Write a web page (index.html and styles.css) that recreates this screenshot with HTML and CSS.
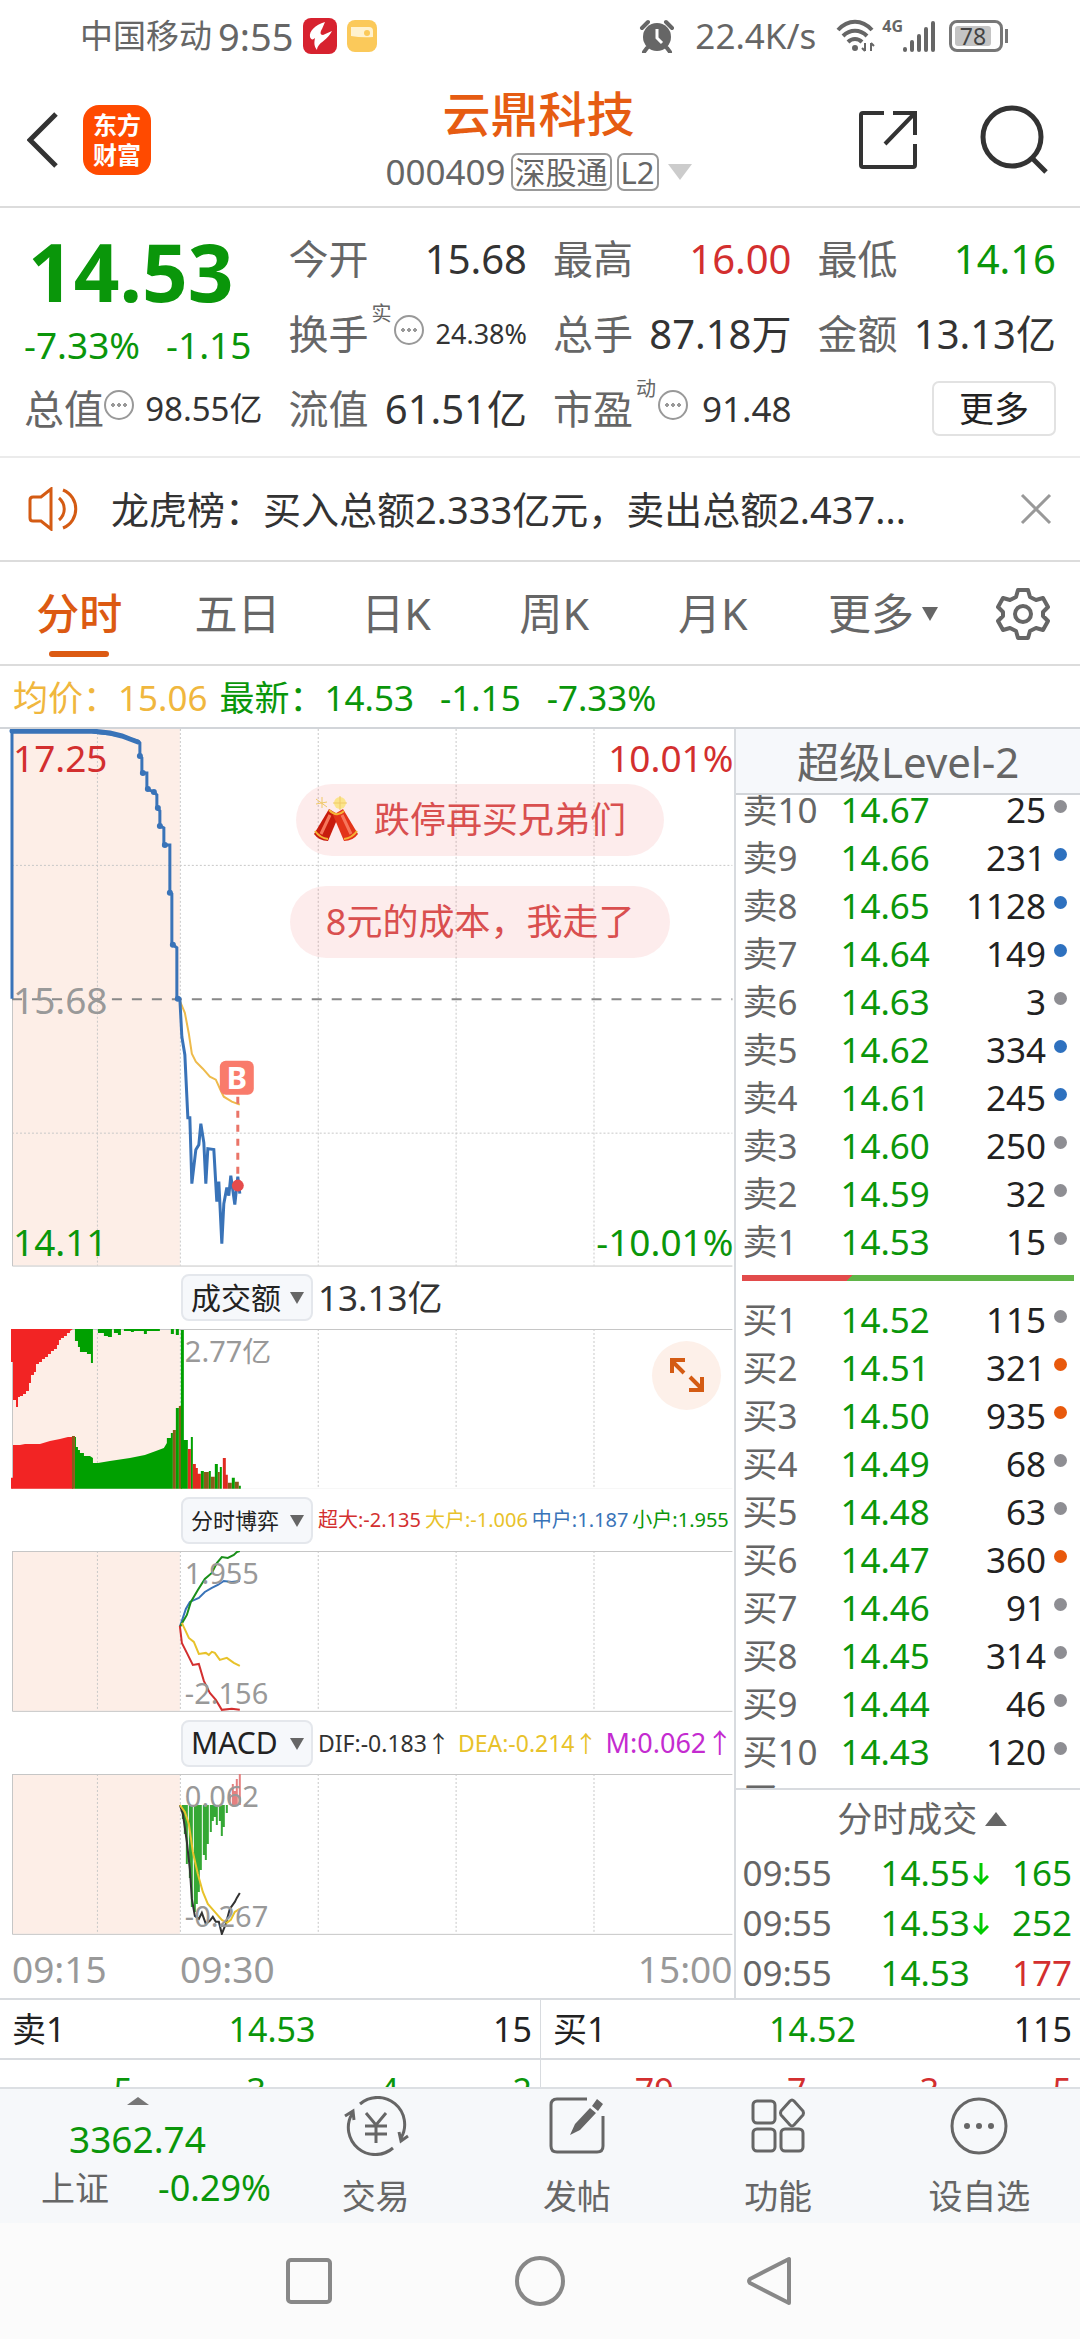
FILE: index.html
```html
<!DOCTYPE html>
<html lang="zh-CN">
<head>
    <meta charset="UTF-8">
    <meta name="viewport" content="width=device-width, initial-scale=1.0">
    <title>云鼎科技 000409</title>
    <link rel="stylesheet" href="styles.css">
</head>
<body>
    <div class="status">
        <span class="carrier">中国移动</span>
        <span class="clock">9:55</span>
        <svg class="app-red" width="34" height="36" viewBox="0 0 34 36"><rect width="34" height="36" rx="8" fill="#d7222f"/><path d="M22 4C12 7 6 13 7 19c1 3 3 3 5 1-1 5-1 8 2 12 1-8 9-8 15-19l-9 4c-3 0-3-3-1-6z" fill="#fff"/></svg>
        <svg width="30" height="32" viewBox="0 0 30 32"><rect width="30" height="32" rx="8" fill="#fbc95a"/><path d="M4 7h18q4 0 4 4v6q-11 1-22-1z" fill="#fff2cf"/><circle cx="20" cy="13" r="3" fill="#fbc95a"/></svg>
        <span class="spacer"></span>
        <svg width="36" height="34" viewBox="0 0 36 34"><circle cx="18" cy="18" r="14" fill="#666"/><path d="M3 9l6-6M33 9l-6-6M8 29l-3 4M28 29l3 4" stroke="#666" stroke-width="4" stroke-linecap="round"/><path d="M18 10v9l5 5" stroke="#fff" stroke-width="3" fill="none"/></svg>
        <span class="speed">22.4K/s</span>
        <svg class="wifi" width="40" height="34" viewBox="0 0 40 34" fill="none" stroke="#666" stroke-width="4"><path d="M2 11c10-11 24-11 34 0M7 17c7-7 17-7 24 0M12 23c4-4 10-4 14 0"/><circle cx="19" cy="29" r="2" fill="#666" stroke-width="2"/><path d="M29 24v8M35 24v8M26 29l3 3M38 27l-3-3" stroke-width="2"/></svg>
        <span class="net">4G</span>
        <svg width="34" height="32" viewBox="0 0 34 32" stroke="#666" stroke-width="4" stroke-linecap="round"><path d="M2 29v1M9 22v8M16 16v14M23 9v21M30 3v27"/></svg>
        <span class="battery"><span>78</span></span>
    </div>

    <header class="header">
        <div class="header-left">
            <button class="icon-btn" aria-label="返回"><svg width="32" height="56" viewBox="0 0 32 56"><path d="M29 2L3 28l26 26" fill="none" stroke="#333" stroke-width="5"/></svg></button>
            <div class="logo">东方<br>财富</div>
        </div>
        <div class="header-title">
            <h1>云鼎科技</h1>
            <div class="code">
                <span>000409</span>
                <span class="badge">深股通</span>
                <span class="badge">L2</span>
                <svg width="24" height="16" viewBox="0 0 24 16"><path d="M0 0h24L12 16z" fill="#ccc"/></svg>
            </div>
        </div>
        <div class="header-right">
            <button class="icon-btn" aria-label="分享"><svg width="60" height="60" viewBox="0 0 60 60" fill="none" stroke="#333" stroke-width="4"><path d="M26 3H5q-2 0-2 2v50q0 2 2 2h50q2 0 2-2V34M35 3h22v22M56 4L27 34"/></svg></button>
            <button class="icon-btn" aria-label="搜索"><svg width="72" height="70" viewBox="0 0 72 70" fill="none" stroke="#333" stroke-width="5"><circle cx="34" cy="32" r="29"/><path d="M54 53l14 14"/></svg></button>
        </div>
    </header>

    <section class="quote">
        <div class="price">
            <div class="last">14.53</div>
            <div class="change"><span>-7.33%</span><span>-1.15</span></div>
        </div>
        <div class="cell"><span>今开</span><b>15.68</b></div>
        <div class="cell"><span>最高</span><b class="red">16.00</b></div>
        <div class="cell"><span>最低</span><b class="green">14.16</b></div>
        <div class="cell"><span>换手</span><sup>实</sup><i class="more-dot"></i><b class="small">24.38%</b></div>
        <div class="cell"><span>总手</span><b>87.18万</b></div>
        <div class="cell"><span>金额</span><b>13.13亿</b></div>
        <div class="cell"><span>总值</span><i class="more-dot"></i><b class="mid">98.55亿</b></div>
        <div class="cell"><span>流值</span><b>61.51亿</b></div>
        <div class="cell"><span>市盈</span><sup>动</sup><i class="more-dot"></i><b class="pe">91.48</b></div>
        <div class="cell"><button class="more-btn">更多</button></div>
    </section>

    <section class="notice">
        <svg width="52" height="44" viewBox="0 0 52 44" fill="none" stroke="#d45b13" stroke-width="3"><path d="M23 2v40L13 34H5q-3 0-3-3V13q0-3 3-3h8zM31 11c7 6 7 16 0 22M35 3c17 7 17 31 0 38"/></svg>
        <p>龙虎榜：买入总额2.333亿元，卖出总额2.437...</p>
        <button class="icon-btn" aria-label="关闭"><svg width="32" height="32" viewBox="0 0 32 32"><path d="M2 2l28 28M30 2L2 30" stroke="#999" stroke-width="3"/></svg></button>
    </section>

    <nav class="tabs">
        <button class="tab active">分时</button>
        <button class="tab">五日</button>
        <button class="tab">日K</button>
        <button class="tab">周K</button>
        <button class="tab">月K</button>
        <button class="tab tab-more">更多<svg width="16" height="14" viewBox="0 0 16 14"><path d="M0 0h16L8 14z" fill="#666"/></svg></button>
        <button class="tab tab-gear" aria-label="设置"><svg width="54" height="54" viewBox="0 0 54 54" fill="none" stroke="#666" stroke-width="4" stroke-linejoin="round"><path d="M22 3h10l2 7 6 3 7-2 5 9-5 5v4l5 5-5 9-7-2-6 3-2 7H22l-2-7-6-3-7 2-5-9 5-5v-4l-5-5 5-9 7 2 6-3z"/><circle cx="27" cy="27" r="8"/></svg></button>
    </nav>

    <div class="legend">
        <span class="amber">均价：15.06</span>
        <span>最新：14.53</span>
        <span class="num">-1.15</span>
        <span class="num">-7.33%</span>
    </div>

    <main class="main">
        <div class="charts">
            <div class="chart">
                <svg class="plot" viewBox="0 0 735 538">
                    <rect class="auction" x="12" y="0" width="168" height="537"/>
                    <path class="grid" d="M97.5 0V537M180.5 0V537M318.5 0V537M456.5 0V537M594.5 0V537M12 136.500H733M12 404.500H733"/>
                    <path class="frame" d="M12.500 0V537.500H733"/>
                    <path d="M12 270.500H733" stroke="#888" stroke-width="2" stroke-dasharray="10 10"/>
                    <path class="line amber-line" d="M180 272L185 284L189 305L192 325L196 333L203 340L210 348L216 351L221 362L224 368L232 373L240 376"/>
                    <path class="line price-line" d="M12 270V3H92L110 5L122 7L130 10L138 12L140 14V27L142 29V44H147V60L154 63L157 66V79L160 82V97L164 99V116H170V164L172 165V215L177 219V270H180L182 308L185 326L188 389H190L192 455L196 421L199 416L201 395L204 414L206 455L208 420L214 421L217 473L219 453L222 515L224 475L227 459L229 467L231 447L235 476L238 448L240 465"/>
                    <path d="M12 2H92L110 4L122 7L130 10L138 13" fill="none" stroke="#3973b8" stroke-width="5" stroke-linecap="round"/>
                    <g fill="#3973b8"><circle cx="140" cy="27" r="3"/><circle cx="143" cy="44" r="3"/><circle cx="148" cy="60" r="3"/><circle cx="154" cy="63" r="3"/><circle cx="158" cy="79" r="3"/><circle cx="160" cy="97" r="3"/><circle cx="165" cy="116" r="3"/><circle cx="170" cy="164" r="3"/><circle cx="173" cy="216" r="3"/><circle cx="178" cy="270" r="3"/></g>
                    <path d="M238 368V446" stroke="#ea7468" stroke-width="3" stroke-dasharray="7 7"/>
                    <circle cx="238" cy="457" r="6" fill="#e54b4b"/>
                    <rect x="220" y="332" width="34" height="34" rx="6" fill="#f97b6b"/>
                    <text class="mark" x="237" y="360">B</text>
                    <text class="axis up" x="13" y="43">17.25</text>
                    <text class="axis" x="13" y="285">15.68</text>
                    <text class="axis down" x="13" y="527">14.11</text>
                    <text class="axis up end" x="734" y="43">10.01%</text>
                    <text class="axis down end" x="734" y="527">-10.01%</text>
                </svg>
                <div class="bubbles">
                    <div class="bubble">
                        <svg width="48" height="48" viewBox="0 0 48 48"><path d="M17 13l10 6-11 26q-9 0-14-7z" fill="#c81c0d"/><path d="M31 13l-10 6 11 26q9 0 14-7z" fill="#e33419"/><path d="M18 19l-9 19M30 19l9 19" stroke="#f7765b" stroke-width="3"/><path d="M3 35q5 7 13 8M45 35q-5 7-13 8M17 14q8 8 15 1" stroke="#f5b335" stroke-width="2" fill="none"/><circle cx="28" cy="7" r="6" fill="#fbe48b"/><path d="M28 0v14M21 7h14M4 3l11 8M10 1v11M4 8l11-2" stroke="#f0c968" stroke-width="1"/></svg>
                        跌停再买兄弟们
                    </div>
                    <div class="bubble wide">8元的成本，我走了</div>
                </div>
            </div>

            <div class="ind-head">
                <div class="pick"><select aria-label="指标一"><option>成交额</option></select><i></i></div>
                <span class="total">13.13亿</span>
            </div>
            <div class="chart">
                <svg class="plot" viewBox="0 0 735 161">
                    <rect class="auction" x="12" y="0" width="168" height="160"/>
                    <path class="grid" d="M97.5 0V160M180.5 0V160M318.5 0V160M456.5 0V160M594.5 0V160"/>
                    <path class="frame" d="M12.500 0V160.500H733M12.500 .5H733"/>
                    <path fill="#f22424" d="M11 0H73L70 2V4H67V7H64V9H61V11H59V16H57V20H54V22H51V25H48V28H45V30H42V33H39V35H36V43H34V46H31V54H29V62H26V65H23V67H20V68H18V78H16V71H13V33H11z"/>
                    <path fill="#f22424" d="M11 160V149H13V116H20L25 115H40L50 112L60 110L68 108H73V160z"/>
                    <path fill="#00a000" d="M75 0H93V34H91V25H87V23H80V18H78V12H75zM98 0H112V8H108V7H104V4H98zM114 0H121V6H118V4H114zM124 0H160V2H147V5H144V2H134V3H131V2H124zM171 0H174V5H171zM176 0H179V6H176z"/>
                    <path fill="#00a000" d="M75 160V108H76V118H78V121H80V124H84V127H90L93 129V134H98L110 132L130 129L145 126L156 122L164 119L167 114V109H171V104H173V160z"/>
                    <path fill="#8a5a1a" d="M72 107H75V160H72zM173 101H176V160H173zM179 77H182V160H179z"/>
                    <path fill="#00a000" d="M176 79H179V160H176zM181 1H184V160H181zM184 111H188V160H184zM191 108H193V160H191zM201 142H204V160H201zM209 142H211V160H209zM215 135H218V160H215zM220 138H222V160H220zM232 149H235V160H232zM239 157H241V160H239z"/>
                    <path fill="#e02a20" d="M188 120H191V160H188zM193 135H196V160H193zM196 139H198V160H196zM198 145H201V160H198zM223 129H226V160H223zM226 146H228V160H226z"/>
                    <path fill="#8a5a1a" d="M204 143H209V160H204zM211 148H215V160H211zM218 143H220V160H218zM228 154H232V160H228zM235 153H239V160H235z"/>
                    <text class="axis sm" x="185" y="33">2.77亿</text>
                </svg>
                <button class="expand" aria-label="放大"><svg width="36" height="36" viewBox="0 0 36 36" fill="none" stroke="#d45b13" stroke-width="4"><path d="M3 16V3h13M3 4l12 12M33 20v13H20M33 32L21 20"/></svg></button>
            </div>

            <div class="ind-head">
                <div class="pick four"><select aria-label="指标二"><option>分时博弈</option></select><i></i></div>
                <div class="flows">
                    <span class="red">超大:-2.135</span>
                    <span class="gold">大户:-1.006</span>
                    <span class="blue">中户:1.187</span>
                    <span class="green">小户:1.955</span>
                </div>
            </div>
            <div class="chart">
                <svg class="plot" viewBox="0 0 735 161">
                    <rect class="auction" x="12" y="0" width="168" height="160"/>
                    <path class="grid" d="M97.5 0V160M180.5 0V160M318.5 0V160M456.5 0V160M594.5 0V160"/>
                    <path class="frame" d="M12.500 0V160.500H733M12.500 .5H733"/>
                    <path class="line" stroke="#3973b8" d="M180 76L186 58L190 51L199 47L205 41L212 37L218 34L224 30L232 31L240 30"/>
                    <path class="line" stroke="#1a8f1a" d="M180 76L187 64L191 51L198 39L205 28L212 22L217 12L222 6L228 7L234 4L237 1L240 0"/>
                    <path class="line" stroke="#e8c22a" d="M182 72L189 87L194 91L199 103L206 102L209 104L212 101L215 102L220 109L227 107L234 112L240 115"/>
                    <path class="line" stroke="#d32f2f" d="M180 75L182 92L187 102L193 114L199 113L204 130L210 142L216 149L222 159L232 158L240 159"/>
                    <text class="axis sm" x="185" y="33">1.955</text>
                    <text class="axis sm" x="185" y="153">-2.156</text>
                </svg>
            </div>

            <div class="ind-head">
                <div class="pick"><select aria-label="指标三"><option>MACD</option></select><i></i></div>
                <div class="macd">
                    <span>DIF:-0.183↑</span>
                    <span class="gold">DEA:-0.214↑</span>
                    <span class="magenta">M:0.062↑</span>
                </div>
            </div>
            <div class="chart">
                <svg class="plot" viewBox="0 0 735 161">
                    <rect class="auction" x="12" y="0" width="168" height="160"/>
                    <path class="grid" d="M97.5 0V160M180.5 0V160M318.5 0V160M456.5 0V160M594.5 0V160"/>
                    <path class="frame" d="M12.500 0V160.500H733M12.500 .5H733"/>
                    <path stroke="#35a835" stroke-width="2" d="M183 31V45M185 31V60M187 31V90M190 31V104M192 31V133M195 31V138M197 31V130M199 31V118M201 31V96M204 31V81M206 31V86M208 31V70M211 31V58M213 31V47M215 31V43M217 31V51M220 31V47M222 31V62M224 31V53M227 31V39"/>
                    <path stroke="#e58080" stroke-width="2" d="M230 20V31M233 10V31M235 17V31M237 5V31M240 0V31"/>
                    <path class="line" stroke="#333" d="M180 31L183 40L187 68L190 95L192 125L195 142L199 145L202 139L206 150L210 147L213 143L216 148L219 148L222 160L226 150L230 135L235 128L237 124L240 119"/>
                    <path class="line" stroke="#e8c22a" d="M180 31L185 38L189 50L193 78L198 100L203 118L208 130L215 138L222 146L227 149L231 146L235 138L240 135"/>
                    <text class="axis sm" x="185" y="33">0.062</text>
                    <text class="axis sm" x="185" y="153">-0.267</text>
                </svg>
            </div>
            <div class="times"><span>09:15</span><span>09:30</span><span>15:00</span></div>
        </div>

        <aside class="side">
            <h2>超级Level-2</h2>
            <div class="book">
                <table class="asks">
                    <tr><th>卖10</th><td>14.67</td><td>25</td><td><i class="dot"></i></td></tr>
                    <tr><th>卖9</th><td>14.66</td><td>231</td><td><i class="dot b"></i></td></tr>
                    <tr><th>卖8</th><td>14.65</td><td>1128</td><td><i class="dot b"></i></td></tr>
                    <tr><th>卖7</th><td>14.64</td><td>149</td><td><i class="dot b"></i></td></tr>
                    <tr><th>卖6</th><td>14.63</td><td>3</td><td><i class="dot"></i></td></tr>
                    <tr><th>卖5</th><td>14.62</td><td>334</td><td><i class="dot b"></i></td></tr>
                    <tr><th>卖4</th><td>14.61</td><td>245</td><td><i class="dot b"></i></td></tr>
                    <tr><th>卖3</th><td>14.60</td><td>250</td><td><i class="dot"></i></td></tr>
                    <tr><th>卖2</th><td>14.59</td><td>32</td><td><i class="dot"></i></td></tr>
                    <tr><th>卖1</th><td>14.53</td><td>15</td><td><i class="dot"></i></td></tr>
                </table>
                <div class="ratio"></div>
                <table>
                    <tr><th>买1</th><td>14.52</td><td>115</td><td><i class="dot"></i></td></tr>
                    <tr><th>买2</th><td>14.51</td><td>321</td><td><i class="dot o"></i></td></tr>
                    <tr><th>买3</th><td>14.50</td><td>935</td><td><i class="dot o"></i></td></tr>
                    <tr><th>买4</th><td>14.49</td><td>68</td><td><i class="dot"></i></td></tr>
                    <tr><th>买5</th><td>14.48</td><td>63</td><td><i class="dot"></i></td></tr>
                    <tr><th>买6</th><td>14.47</td><td>360</td><td><i class="dot o"></i></td></tr>
                    <tr><th>买7</th><td>14.46</td><td>91</td><td><i class="dot"></i></td></tr>
                    <tr><th>买8</th><td>14.45</td><td>314</td><td><i class="dot"></i></td></tr>
                    <tr><th>买9</th><td>14.44</td><td>46</td><td><i class="dot"></i></td></tr>
                    <tr><th>买10</th><td>14.43</td><td>120</td><td><i class="dot"></i></td></tr>
                    <tr><th>买11</th><td>14.42</td><td>138</td><td></td></tr>
                </table>
            </div>
            <div class="deals">
                <h3>分时成交<svg width="22" height="14" viewBox="0 0 22 14"><path d="M0 14L11 0l11 14z" fill="#666"/></svg></h3>
                <table>
                    <tr><th>09:55</th><td>14.55<svg width="16" height="24" viewBox="0 0 16 24"><path d="M8 1v20M1 14l7 7 7-7" fill="none" stroke="#0c0" stroke-width="3"/></svg></td><td>165</td></tr>
                    <tr><th>09:55</th><td>14.53<svg width="16" height="24" viewBox="0 0 16 24"><path d="M8 1v20M1 14l7 7 7-7" fill="none" stroke="#0c0" stroke-width="3"/></svg></td><td>252</td></tr>
                    <tr><th>09:55</th><td>14.53</td><td class="red">177</td></tr>
                </table>
            </div>
        </aside>
    </main>

    <section class="best">
        <div class="half">
            <div class="best-row"><span>卖1</span><b>14.53</b><span>15</span></div>
            <div class="queue"><span>5</span><span>3</span><span>4</span><span>2</span></div>
        </div>
        <div class="half">
            <div class="best-row"><span>买1</span><b>14.52</b><span>115</span></div>
            <div class="queue red"><span>79</span><span>7</span><span>3</span><span>5</span></div>
        </div>
    </section>

    <footer class="toolbar">
        <div class="index">
            <svg width="22" height="8" viewBox="0 0 22 8"><path d="M0 8L11 0l11 8z" fill="#777"/></svg>
            <div class="index-value">3362.74</div>
            <div class="index-row"><span>上证</span><b>-0.29%</b></div>
        </div>
        <button class="tool"><svg width="66" height="60" viewBox="0 0 66 60" fill="none" stroke="#666" stroke-width="3"><path d="M17 8A27 27 0 0 1 58 42M50 52A27 27 0 0 1 9 18M2 20l8-5 1 9M65 40l-7 5-2-9M23 17l10 12 10-12M33 29v18M22 30h22M22 38h22"/></svg>交易</button>
        <button class="tool"><svg width="60" height="60" viewBox="0 0 60 60" fill="none" stroke="#666" stroke-width="3"><path d="M40 3H10q-6 0-6 6v41q0 6 6 6h40q6 0 6-6V20"/><path d="M50 3l6 5-5 7-6-5zM43 12l6 5-16 17-10 5 5-11z" fill="#666" stroke="none"/></svg>发帖</button>
        <button class="tool"><svg width="60" height="60" viewBox="0 0 60 60" fill="none" stroke="#666" stroke-width="3"><rect x="5" y="5" width="22" height="22" rx="4"/><rect x="5" y="33" width="22" height="22" rx="4"/><rect x="33" y="33" width="22" height="22" rx="4"/><path d="M42 5q2-2 4 0l9 10q1 2 0 4l-9 10q-2 2-4 0l-9-10q-1-2 0-4z"/></svg>功能</button>
        <button class="tool"><svg width="60" height="60" viewBox="0 0 60 60" fill="none" stroke="#666" stroke-width="3"><circle cx="30" cy="30" r="27"/><g fill="#666" stroke="none"><circle cx="18" cy="30" r="3"/><circle cx="30" cy="30" r="3"/><circle cx="42" cy="30" r="3"/></g></svg>设自选</button>
    </footer>

    <nav class="system">
        <button class="icon-btn" aria-label="最近任务"><svg width="50" height="50" viewBox="0 0 50 50"><rect x="4" y="4" width="42" height="42" rx="3" fill="none" stroke="#888" stroke-width="4"/></svg></button>
        <button class="icon-btn" aria-label="主屏幕"><svg width="50" height="50" viewBox="0 0 50 50"><circle cx="25" cy="25" r="23" fill="none" stroke="#888" stroke-width="4"/></svg></button>
        <button class="icon-btn" aria-label="后退"><svg width="50" height="50" viewBox="0 0 50 50"><path d="M43 3v44L4 27q-2-2 0-4z" fill="none" stroke="#888" stroke-width="4" stroke-linejoin="round"/></svg></button>
    </nav>
</body>
</html>
```
FILE: styles.css
```css
* {
    box-sizing: border-box;
}
body {
    margin: 0;
    background: #fff;
    color: #333;
    font-family: "Noto Sans", "Noto Sans CJK SC", sans-serif;
    font-size: 35px;
    line-height: 48px;
}
h1, h2, h3, p {
    margin: 0;
    font-weight: 400;
}
button, select {
    font: inherit;
    color: inherit;
    background: none;
    border: 0;
    padding: 0;
    margin: 0;
}
svg {
    display: block;
    flex: none;
}
b, i, th {
    font-weight: 400;
    font-style: normal;
}
table {
    width: 100%;
    border-collapse: collapse;
    table-layout: fixed;
}
th, td {
    padding: 0;
    text-align: left;
    white-space: nowrap;
}
.red { color: #d32f2f; }
.green { color: #0a960a; }
.gold { color: #e8c22a; }
.blue { color: #3973b8; }
.magenta { color: #c42bd0; }

/* status bar */
.status {
    display: flex;
    align-items: center;
    height: 72px;
    padding: 0 77px 0 80px;
    color: #666;
}
.carrier {
    font-size: 33px;
    margin-right: 6px;
}
.clock {
    font-size: 38px;
    margin-right: 10px;
}
.app-red {
    margin-right: 10px;
}
.spacer {
    flex: 1;
}
.speed {
    margin: 0 20px;
}
.net {
    align-self: flex-start;
    margin-top: 14px;
    font-size: 16px;
    line-height: 24px;
    font-weight: 700;
    margin-left: 6px;
}
.battery {
    position: relative;
    margin-left: 12px;
    width: 54px;
    height: 32px;
    padding: 3px;
    border: 3px solid #777;
    border-radius: 8px;
}
.battery span {
    display: block;
    width: 36px;
    font-size: 23px;
    line-height: 20px;
    text-align: center;
    background: #c4c4c4;
    border-radius: 3px;
    color: #444;
}
.battery::after {
    content: "";
    position: absolute;
    right: -8px;
    top: 6px;
    width: 3px;
    height: 14px;
    background: #777;
}

/* header */
.header {
    display: grid;
    grid-template-columns: 1fr auto 1fr;
    align-items: center;
    height: 136px;
    padding: 2px 30px 0 27px;
    border-bottom: 2px solid #dcdcdc;
}
.header-left, .header-right {
    display: flex;
    align-items: center;
    gap: 24px;
}
.header-right {
    justify-content: flex-end;
    gap: 60px;
}
.logo {
    width: 68px;
    height: 70px;
    padding-top: 5px;
    border-radius: 16px;
    background: #ff4a00;
    color: #fff;
    font-size: 24px;
    line-height: 30px;
    font-weight: 700;
    text-align: center;
}
.header h1 {
    color: #e65c12;
    font-size: 48px;
    line-height: 64px;
    font-weight: 500;
    text-align: center;
}
.code {
    display: flex;
    align-items: center;
    gap: 5px;
    height: 52px;
    color: #666;
}
.code svg {
    margin-left: 4px;
}
.badge {
    padding: 0 2px;
    border: 2px solid #999;
    border-radius: 7px;
    font-size: 31px;
    line-height: 34px;
}

/* quote */
.quote {
    display: grid;
    grid-template-columns: repeat(4, 1fr);
    grid-auto-rows: 75px;
    column-gap: 26px;
    padding: 13px 24px 10px;
    border-bottom: 2px solid #ebebeb;
}
.price {
    grid-row: span 2;
    color: #0a960a;
}
.last {
    padding: 10px 0 0 4px;
    font-size: 80px;
    line-height: 80px;
    font-weight: 700;
}
.change {
    display: flex;
    gap: 26px;
    padding-top: 10px;
    font-size: 37px;
}
.cell {
    display: flex;
    align-items: center;
    font-size: 40px;
    color: #666;
}
.cell b {
    margin-left: auto;
    color: #333;
}
.cell b.red { color: #d32f2f; }
.cell b.green { color: #0a960a; }
.cell b.small { font-size: 27px; }
.cell b.mid { font-size: 33px; }
.cell b.pe { font-size: 35px; }
.cell sup {
    align-self: flex-start;
    margin: 4px 2px 0 3px;
    font-size: 20px;
    line-height: 28px;
}
.more-dot {
    flex: none;
    width: 30px;
    height: 30px;
    border: 2px solid #999;
    border-radius: 50%;
    background: radial-gradient(circle, #999 2px, transparent 2px) 50% / 6px 6px content-box no-repeat;
    padding: 0 4px;
    margin-bottom: 8px;
    background-repeat: repeat-x;
}
.more-btn {
    margin-left: auto;
    width: 124px;
    height: 55px;
    border: 2px solid #e2e2e2;
    border-radius: 7px;
    color: #222;
    font-size: 35px;
    line-height: 48px;
}

/* notice */
.notice {
    display: flex;
    align-items: center;
    height: 104px;
    padding: 0 28px;
    border-bottom: 2px solid #dcdcdc;
}
.notice p {
    flex: 1;
    margin-left: 31px;
    font-size: 38px;
    white-space: nowrap;
}

/* period tabs */
.tabs {
    display: flex;
    height: 104px;
    padding-right: 8px;
    border-bottom: 2px solid #dcdcdc;
    color: #666;
    font-size: 43px;
}
.tab {
    position: relative;
    flex: 1;
    display: flex;
    align-items: center;
    justify-content: center;
    gap: 8px;
    padding-top: 2px;
}
.tab.active {
    color: #dc5a12;
    font-weight: 500;
}
.tab.active::after {
    content: "";
    position: absolute;
    left: 50%;
    bottom: 7px;
    width: 60px;
    height: 6px;
    margin-left: -30px;
    border-radius: 3px;
    background: #dc5a12;
}
.tab-more {
    flex: 0 0 182px;
}
.tab-gear {
    flex: 0 0 98px;
}
.legend {
    display: flex;
    gap: 12px;
    height: 63px;
    padding: 8px 13px;
    border-bottom: 2px solid #d2d5d9;
    color: #0a960a;
}
.legend .num {
    margin-left: 14px;
}
.legend .amber {
    color: #f0b73e;
}

/* charts and order book */
.main {
    display: grid;
    grid-template-columns: 68fr 32fr;
}
.chart {
    position: relative;
}
.plot {
    width: 100%;
    height: auto;
}
.auction {
    fill: #fdeee7;
}
.grid {
    fill: none;
    stroke: #c8c8c8;
    stroke-dasharray: 2 2;
}
.frame {
    fill: none;
    stroke: #c6c6c6;
    stroke-width: 1;
}
.line {
    fill: none;
    stroke-width: 2;
}
.price-line {
    stroke: #3973b8;
    stroke-width: 3;
}
.amber-line {
    stroke: #eebb4c;
}
.axis {
    fill: #999;
    font-size: 37px;
}
.axis.sm { font-size: 29px; }
.axis.up { fill: #d32f2f; }
.axis.down { fill: #0a960a; }
.axis.end { text-anchor: end; }
.mark {
    fill: #fff;
    font-size: 31px;
    font-weight: 700;
    text-anchor: middle;
}
.bubbles {
    position: absolute;
    top: 55px;
    right: 64px;
    display: flex;
    flex-direction: column;
    align-items: center;
    gap: 30px;
}
.bubble {
    display: flex;
    align-items: center;
    gap: 14px;
    height: 72px;
    padding: 0 38px 0 16px;
    border-radius: 36px;
    background: rgba(240, 80, 80, .11);
    color: #d94f4f;
    font-size: 36px;
}
.bubble.wide {
    padding: 0 36px;
}
.ind-head {
    display: flex;
    align-items: center;
    gap: 5px;
    height: 62px;
    padding-left: 181px;
}
.pick {
    position: relative;
    flex: none;
    width: 132px;
}
.pick select {
    appearance: none;
    display: block;
    width: 100%;
    height: 47px;
    padding-left: 8px;
    border: 2px solid #e4e7ec;
    border-radius: 8px;
    background: #f6f8fb;
    color: #222;
    font-size: 30px;
    line-height: 40px;
}
.pick.four select {
    font-size: 22px;
}
.pick i {
    position: absolute;
    right: 9px;
    top: 18px;
    border: 7px solid transparent;
    border-top: 12px solid #666;
    border-bottom: 0;
    pointer-events: none;
}
.flows, .macd {
    display: flex;
    align-items: center;
    gap: 4px;
    font-size: 20px;
    white-space: nowrap;
}
.macd {
    gap: 8px;
    font-size: 23px;
}
.macd .magenta {
    font-size: 27px;
}
.expand {
    position: absolute;
    top: 12px;
    right: 13px;
    width: 69px;
    height: 69px;
    display: grid;
    place-items: center;
    border-radius: 50%;
    background: #fdf0e9;
}
.times {
    display: flex;
    padding: 10px 2px 5px 12px;
    color: #999;
    font-size: 37px;
}
.times span {
    width: 168px;
}
.times span:last-child {
    flex: 1;
    text-align: right;
}
.side {
    display: flex;
    flex-direction: column;
    border-left: 2px solid #d8dbdf;
}
.side h2 {
    height: 66px;
    border-bottom: 2px solid #d2d5d9;
    background: #f6f8fb;
    color: #666;
    font-size: 42px;
    line-height: 66px;
    text-align: center;
}
.book {
    flex: 1;
    contain: size;
    overflow: hidden;
    padding: 0 6px;
}
.book tr {
    height: 48px;
}
.book th {
    width: 98px;
    color: #666;
}
.book td:nth-child(2) {
    width: 100px;
    color: #0a960a;
}
.book td:nth-child(3) {
    text-align: right;
    color: #222;
}
.book td:nth-child(4) {
    width: 28px;
}
.asks {
    margin-top: -9px;
}
.dot {
    display: block;
    width: 13px;
    height: 13px;
    margin: 0 0 8px 8px;
    border-radius: 50%;
    background: #8e8e93;
}
.dot.b { background: #2e71bf; }
.dot.o { background: #e8590c; }
.ratio {
    height: 6px;
    margin: 9px 0 15px;
    background: linear-gradient(135deg, #e24b4b 78px, #5fb548 78px);
}
.deals {
    padding: 0 8px 0 6px;
    border-top: 2px solid #d8dbdf;
}
.deals h3 {
    display: flex;
    align-items: center;
    justify-content: center;
    gap: 8px;
    height: 58px;
    padding-left: 30px;
    color: #666;
    font-size: 35px;
}
.deals tr {
    height: 50px;
}
.deals th {
    width: 138px;
    color: #666;
}
.deals td {
    color: #0a960a;
}
.deals td svg {
    display: inline-block;
    margin-left: 3px;
}
.deals td:last-child {
    width: 72px;
    text-align: right;
}
.deals td.red {
    color: #d32f2f;
}

/* best bid and ask */
.best {
    display: grid;
    grid-template-columns: 1fr 1fr;
    border-top: 2px solid #d8dbdf;
    font-size: 34px;
}
.half + .half {
    border-left: 1px solid #d8dbdf;
}
.best-row {
    display: grid;
    grid-template-columns: 1fr auto 1fr;
    align-items: center;
    height: 60px;
    padding: 0 8px 0 12px;
    border-bottom: 2px solid #d8dbdf;
    color: #222;
}
.best-row b {
    color: #0a960a;
}
.best-row span:last-child {
    text-align: right;
}
.queue {
    display: grid;
    grid-template-columns: repeat(4, 1fr);
    height: 27px;
    padding-right: 8px;
    overflow: hidden;
    line-height: 60px;
    text-align: right;
    color: #0a960a;
}
.queue.red {
    color: #d32f2f;
}

/* bottom bars */
.toolbar {
    display: flex;
    height: 136px;
    border-top: 2px solid #dcdfe3;
    background: #f6f8fa;
    color: #666;
    font-size: 34px;
}
.index {
    flex: 0 0 275px;
    padding-top: 8px;
    color: #0a960a;
}
.index svg {
    margin: 0 auto;
}
.index-value {
    padding: 10px 0 1px;
    font-size: 37px;
    text-align: center;
}
.index-row {
    display: flex;
    justify-content: space-between;
    padding: 0 4px 0 41px;
}
.index-row span {
    color: #666;
}
.index-row b {
    font-size: 36px;
}
.tool {
    flex: 1;
    display: flex;
    flex-direction: column;
    align-items: center;
    justify-content: flex-start;
    gap: 16px;
    padding-top: 7px;
}
.system {
    display: flex;
    align-items: center;
    justify-content: center;
    gap: 181px;
    height: 116px;
    background: #fbfbfb;
}
```
